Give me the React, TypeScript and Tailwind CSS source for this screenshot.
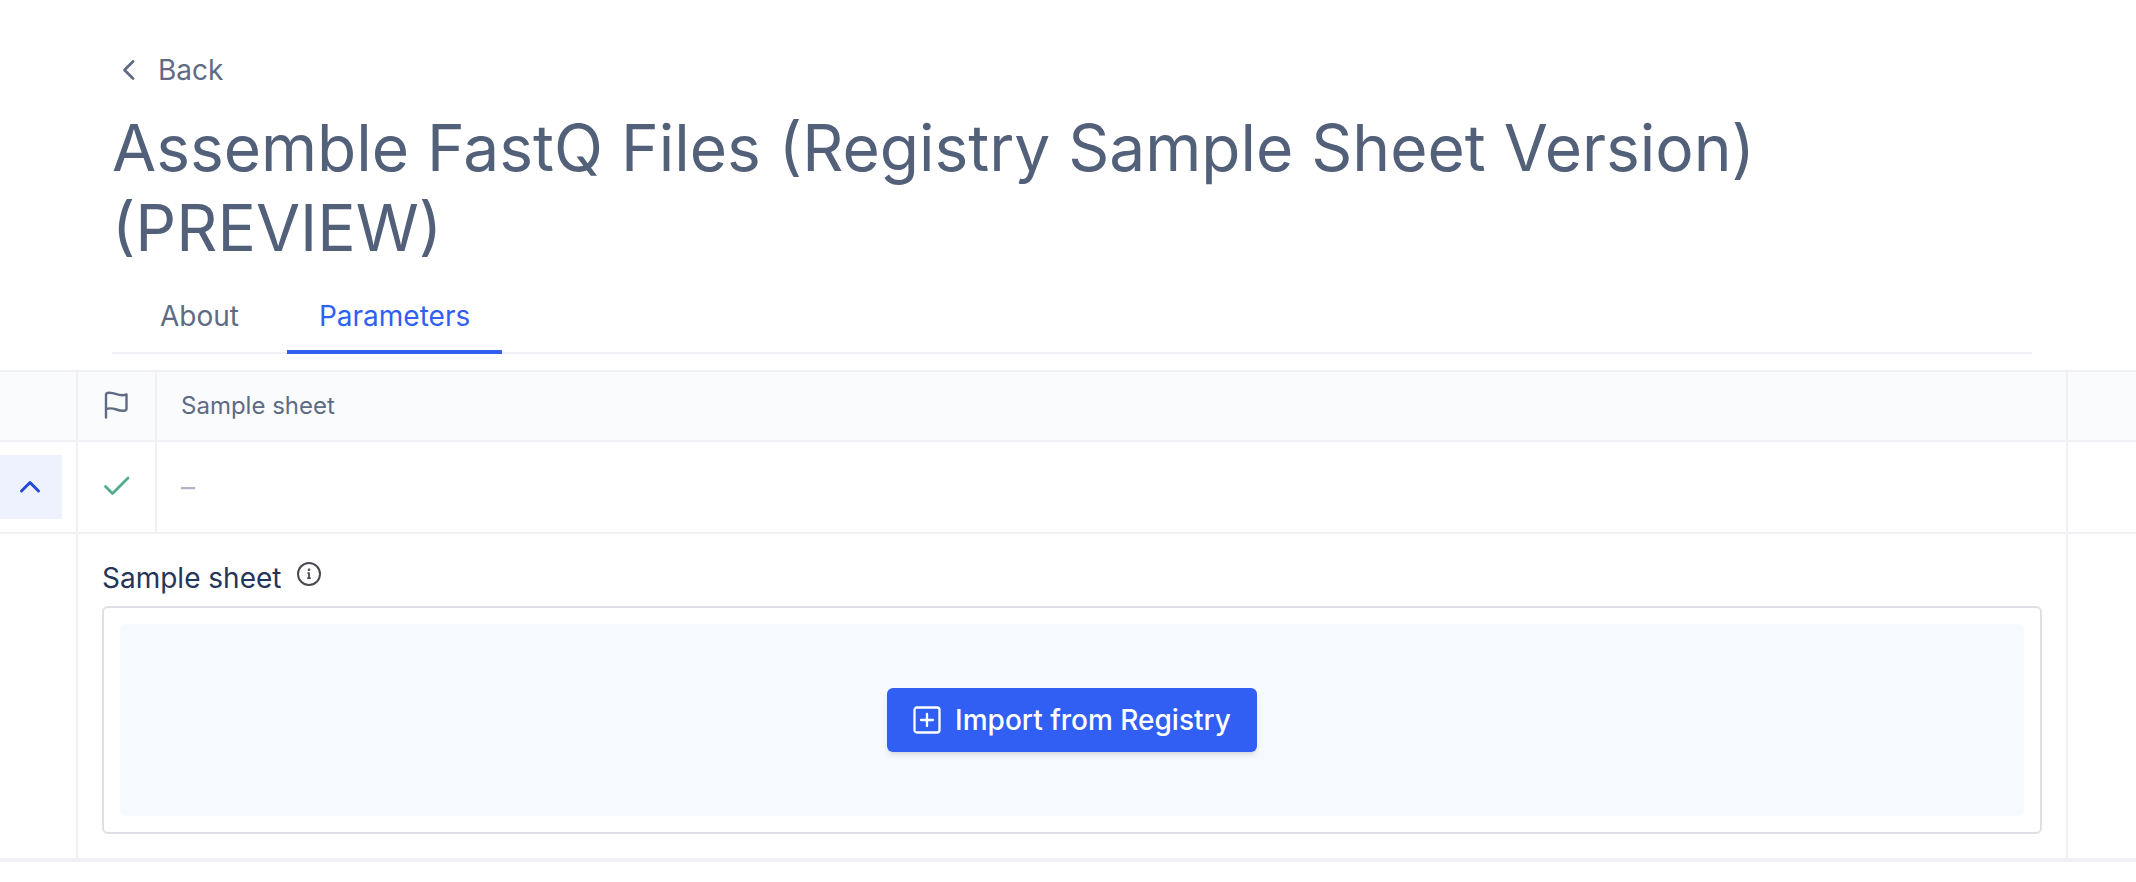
import React from "react";

const stroke = {
  fill: "none",
  stroke: "currentColor",
  strokeLinecap: "round" as const,
  strokeLinejoin: "round" as const,
  "aria-hidden": true,
};

function ChevronLeft() {
  return (
    <svg viewBox="0 0 32 32" className="h-8 w-8" strokeWidth={2.8} {...stroke}>
      <path d="M21 7.500L12.500 16l8.500 8.500" />
    </svg>
  );
}

function ChevronUp() {
  return (
    <svg viewBox="0 0 32 32" className="h-8 w-8" strokeWidth={3} {...stroke}>
      <path d="M7.500 20l8.500-8.500 8.500 8.500" />
    </svg>
  );
}

function Flag() {
  return (
    <svg viewBox="0 0 32 32" className="h-8 w-8" strokeWidth={2.4} {...stroke}>
      <path d="M5 27.500V4.500Q5 3.300 6.200 3C9.500 2.200 12 3 15.500 4.200c3.500 1.200 6.500 1.400 10 .3v14.500c0 .9-.6 1.300-1.500 1.500-3 .7-5.500 0-8.500-1-3.500-1.200-7-1.700-10.500-.5" />
    </svg>
  );
}

function Check() {
  return (
    <svg viewBox="0 0 32 32" className="h-8 w-8" strokeWidth={2.7} {...stroke}>
      <path d="M4.500 15.500l7 7L27 7" />
    </svg>
  );
}

function Info() {
  return (
    <svg viewBox="0 0 24 24" className="h-6 w-6" strokeWidth={2} {...stroke}>
      <circle cx="12" cy="12" r="11" />
      <path d="M10.500 11.200H12v5M10.200 16.200h3.600" strokeWidth={1.800} strokeLinecap="butt" />
      <circle cx="12" cy="7.700" r="1.300" fill="currentColor" stroke="none" />
    </svg>
  );
}

function PlusSquare() {
  return (
    <svg viewBox="0 0 28 28" className="h-7 w-7" strokeWidth={2.3} {...stroke}>
      <rect x="1.500" y="1.500" width="25" height="25" rx="2.500" />
      <path d="M14 8v12M8 14h12" />
    </svg>
  );
}

export default function App() {
  return (
    <main className="bg-white pt-[46px] font-['Inter',sans-serif] text-[#5f6b84]">
      <header className="mr-[104px] ml-28">
        <a href="#back" className="flex h-12 w-fit items-center gap-3.5 text-[28px]">
          <ChevronLeft />
          Back
        </a>
        <h1 className="mt-3.5 text-[64px] leading-[80px] font-normal text-[#526079]">
          Assemble FastQ Files (Registry Sample Sheet Version)
          <br />
          (PREVIEW)
        </h1>
        <nav className="mt-4 flex gap-4 border-b-2 border-[#f0f0f5] pl-4 text-[28px] leading-9">
          <a href="#about" className="px-8 pt-3.5 pb-4">About</a>
          <a href="#parameters" aria-current="page" className="-mb-0.5 border-b-4 border-[#315ff4] px-8 pt-3.5 pb-4 text-[#315ff4]">
            Parameters
          </a>
        </nav>
      </header>

      <table className="mt-4 w-full table-fixed border-separate border-spacing-0 border-t-2 border-b-4 border-[#f0f0f5] text-left">
        <colgroup>
          <col className="w-[78px]" />
          <col className="w-[79px]" />
          <col />
          <col className="w-[68px]" />
        </colgroup>
        <thead className="bg-[#fafbfd] text-2xl">
          <tr className="h-[70px]">
            <th aria-label="Expand" className="border-r-2 border-b-2 border-[#f0f0f5] p-0" />
            <th aria-label="Status" className="border-r-2 border-b-2 border-[#f0f0f5] p-0">
              <div className="flex justify-center"><Flag /></div>
            </th>
            <th className="border-r-2 border-b-2 border-[#f0f0f5] px-6 py-0 font-normal">Sample sheet</th>
            <th aria-label="Actions" className="border-b-2 border-[#f0f0f5] p-0" />
          </tr>
        </thead>
        <tbody>
          <tr className="h-[92px]">
            <td className="border-r-2 border-b-2 border-[#f0f0f5] p-0">
              <button type="button" aria-label="Collapse row" className="flex h-16 w-[62px] items-center justify-end bg-[#eef1fe] pr-4 text-[#2349d8]">
                <ChevronUp />
              </button>
            </td>
            <td className="border-r-2 border-b-2 border-[#f0f0f5] p-0 text-[#4fab8e]">
              <div className="flex justify-center"><Check /></div>
            </td>
            <td className="border-r-2 border-b-2 border-[#f0f0f5] px-6 py-0 text-[28px] text-[#adb5c6]">–</td>
            <td className="border-b-2 border-[#f0f0f5] p-0" />
          </tr>
          <tr>
            <td className="border-r-2 border-[#f0f0f5] p-0" />
            <td colSpan={2} className="border-r-2 border-[#f0f0f5] p-6">
              <div className="flex h-12 items-start gap-4 text-[28px] leading-10 text-[#26345a]">
                <span>Sample sheet</span>
                <span className="pt-1 text-[#4b4b52]"><Info /></span>
              </div>
              <div className="rounded-md border-2 border-[#dfdfe6] p-4">
                <div className="flex h-48 items-center justify-center rounded-md bg-[#f6f9fe]">
                  <button type="button" className="flex h-16 items-center gap-3.5 rounded-md bg-[#315ff4] px-6.5 text-[28px] font-medium text-white shadow-md">
                    <PlusSquare />
                    Import from Registry
                  </button>
                </div>
              </div>
            </td>
            <td className="p-0" />
          </tr>
        </tbody>
      </table>
    </main>
  );
}
